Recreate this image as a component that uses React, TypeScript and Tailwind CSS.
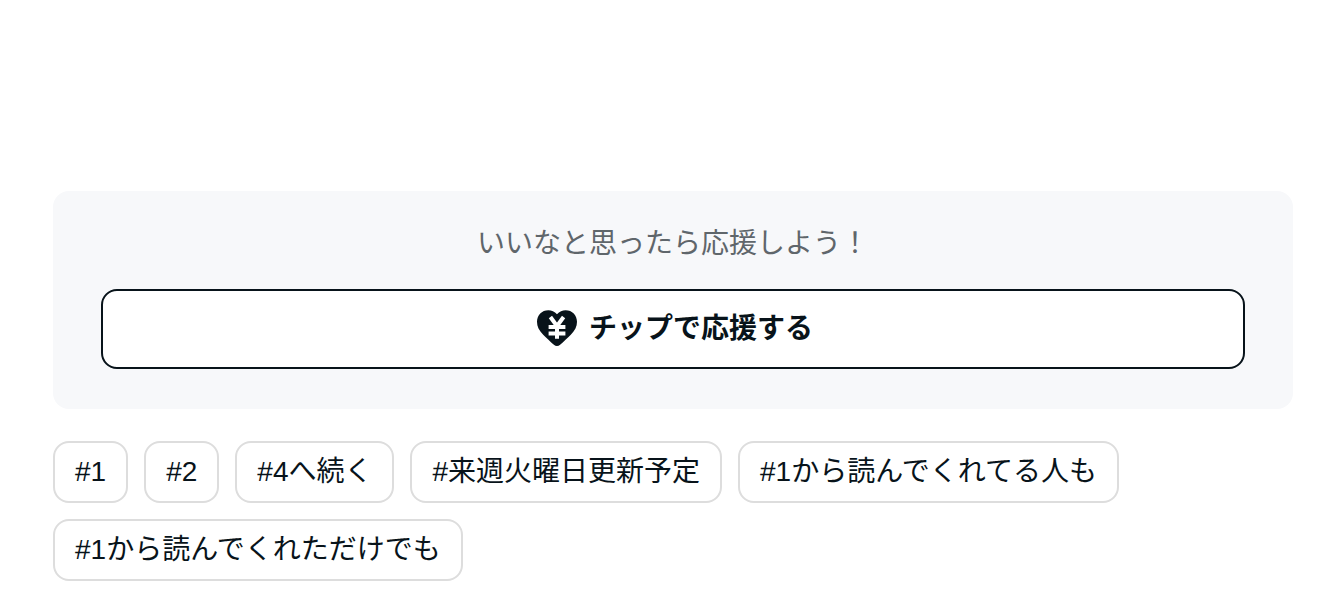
const tags = [
  '#1',
  '#2',
  '#4へ続く',
  '#来週火曜日更新予定',
  '#1から読んでくれてる人も',
  '#1から読んでくれただけでも',
]

function TipIcon() {
  return (
    <svg viewBox="0 0 48 48" className="w-12 h-12 shrink-0" aria-hidden="true">
      <path
        fill="currentColor"
        d="M24 9.2C26.400 6.400 29.500 5.200 32.600 5.200 39.200 5.200 44 10 44 16.800c0 4.900-2 8.600-6.200 12.900-3.200 3.200-7.300 7-10.700 10.100-1.800 1.700-4.400 1.700-6.200 0-3.400-3.100-7.500-6.900-10.700-10.100C6 25.400 4 21.700 4 16.800 4 10 8.800 5.200 15.400 5.200c3.100 0 6.200 1.200 8.600 4z"
      />
      <path
        fill="none"
        stroke="#fff"
        strokeWidth="4"
        d="M17.400 12L24 21l6.600-9M24 20v13.800M15.600 22h16.800M15.600 28.400h16.800"
      />
    </svg>
  )
}

export default function App() {
  return (
    <main className="px-[53px] pr-[51px] pt-[191px] pb-8 bg-white text-[#08131a] text-[28px] leading-[42px] font-['Liberation_Sans','Noto_Sans_CJK_JP',sans-serif]">
      <section className="px-12 pt-8 pb-10 rounded-2xl bg-[#f7f8fa] text-center">
        <p className="text-[#5f666b]">いいなと思ったら応援しよう！</p>
        <button
          type="button"
          className="mt-6 w-full h-20 flex items-center justify-center gap-2 rounded-2xl border-2 border-[#08131a] bg-white font-bold cursor-pointer"
        >
          <TipIcon />
          <span>チップで応援する</span>
        </button>
      </section>

      <ul className="mt-8 flex flex-wrap gap-4">
        {tags.map((tag) => (
          <li key={tag}>
            <a href="#" className="block px-5 py-2 rounded-2xl border-2 border-[#dddddd]">
              {tag}
            </a>
          </li>
        ))}
      </ul>
    </main>
  )
}
